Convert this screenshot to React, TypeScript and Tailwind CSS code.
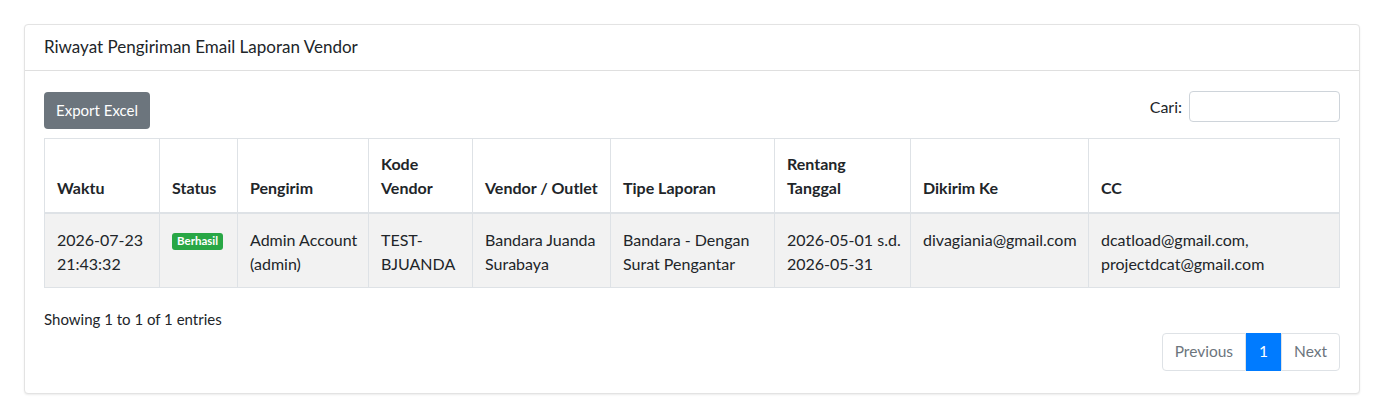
import React from "react";

const cols = [115, 78, 131, 104, 138, 164, 136, 178, 251];

const headers: React.ReactNode[] = [
  "Waktu",
  "Status",
  "Pengirim",
  <>Kode<br />Vendor</>,
  "Vendor / Outlet",
  "Tipe Laporan",
  <>Rentang<br />Tanggal</>,
  "Dikirim Ke",
  "CC",
];

const td = "border border-[#dee2e6] px-3 pt-[14px] pb-[11px] whitespace-nowrap";

export default function App() {
  return (
    <div
      className="min-h-[418px] bg-white p-6 text-[#212529]"
      style={{ fontFamily: "Lato, 'Noto Sans', sans-serif" }}
    >
      <div className="rounded-[4px] border border-[#e3e3e3] shadow-[0_1px_2px_rgba(0,0,0,0.08)] bg-white">
        <div className="h-[46px] flex items-center px-[19px] pb-[1px] border-b border-[#dfdfdf] text-[17px]">
          Riwayat Pengiriman Email Laporan Vendor
        </div>
        <div className="px-[19px] pt-[21px] pb-[22px]">
          <div className="flex items-start justify-between">
            <button className="h-[37px] px-3 rounded-[4px] bg-[#6c757d] text-white text-[15px] leading-none">
              Export Excel
            </button>
            <label className="flex items-center gap-[7px] text-[16px] -mt-[1px]">
              Cari:
              <input className="w-[151px] h-[31px] rounded-[4px] border border-[#ced4da] bg-white" />
            </label>
          </div>
          <table className="mt-[9px] table-fixed border-collapse text-[16px] leading-6 w-[1295px]">
            <colgroup>
              {cols.map((w, i) => (
                <col key={i} style={{ width: w }} />
              ))}
            </colgroup>
            <thead>
              <tr>
                {headers.map((h, i) => (
                  <th
                    key={i}
                    className="border border-[#dee2e6] border-b-2 px-3 pt-[13px] pb-3 text-left align-bottom font-bold"
                  >
                    {h}
                  </th>
                ))}
              </tr>
            </thead>
            <tbody>
              <tr className="bg-[#f2f2f2] align-top">
                <td className={td}>2026-07-23<br />21:43:32</td>
                <td className="border border-[#dee2e6] px-3 pt-[14px] pb-[11px]">
                  <span className="inline-block align-top mt-[5px] rounded-[3px] bg-[#28a745] text-white text-[11.5px] font-bold leading-none px-[5px] pt-[2px] pb-[3px]">
                    Berhasil
                  </span>
                </td>
                <td className={td}>Admin Account<br />(admin)</td>
                <td className={td}>TEST-<br />BJUANDA</td>
                <td className={td}>Bandara Juanda<br />Surabaya</td>
                <td className={td}>Bandara - Dengan<br />Surat Pengantar</td>
                <td className={td}>2026-05-01 s.d.<br />2026-05-31</td>
                <td className={td}>divagiania@gmail.com</td>
                <td className={td}>dcatload@gmail.com,<br />projectdcat@gmail.com</td>
              </tr>
            </tbody>
          </table>
          <div className="mt-[19px] text-[15px] leading-6">Showing 1 to 1 of 1 entries</div>
          <div className="flex justify-end mt-[2px]">
            <div className="flex h-[38px] text-[15.5px]">
              <span className="flex items-center px-3 border border-[#dee2e6] rounded-l-[4px] text-[#6c757d]">Previous</span>
              <span className="flex items-center px-3 bg-[#007bff] text-white border border-[#007bff]">1</span>
              <span className="flex items-center px-3 border border-[#dee2e6] rounded-r-[4px] text-[#6c757d]">Next</span>
            </div>
          </div>
        </div>
      </div>
    </div>
  );
}
